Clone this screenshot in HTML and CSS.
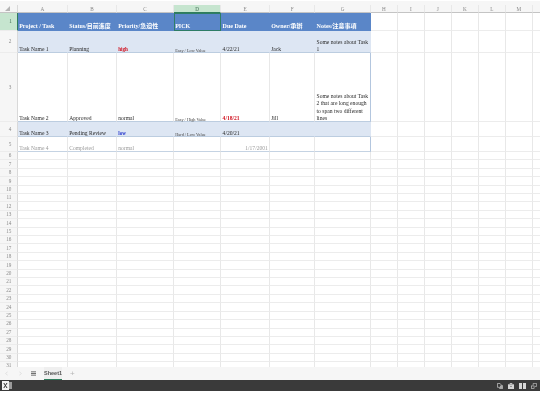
FILE: index.html
```html
<!DOCTYPE html>
<html lang="en">
<head>
<meta charset="utf-8">
<title>Sheet1</title>
<link rel="stylesheet" href="styles.css">
</head>
<body>
<div class="app">
  <div class="sheet">
    <div class="topstrip"></div>
    <div class="row colhead">
      <b class="corner"><svg viewBox="0 0 6 6" width="5" height="5"><path d="M6 0V6H0Z" fill="#b5b5b5"/></svg></b>
      <span>A</span><span>B</span><span>C</span><span class="sel">D</span><span>E</span><span>F</span><span>G</span><span>H</span><span>I</span><span>J</span><span>K</span><span>L</span><span>M</span><span></span>
    </div>
    <div class="row r1">
      <b class="sel">1</b>
      <span class="h">Project / Task</span><span class="h">Status/目前進度</span><span class="h">Priority/急迫性</span><span class="h active">PICK</span><span class="h">Due Date</span><span class="h">Owner/承辦</span><span class="h end">Notes/注意事項</span>
      <span></span><span></span><span></span><span></span><span></span><span></span><span></span>
    </div>
    <div class="row r2 band">
      <b>2</b>
      <span>Task Name 1</span><span>Planning</span><span class="red small">high</span><span class="tiny">Easy / Low Value</span><span>4/22/21</span><span>Jack</span><span class="note end"><i>Some notes about Task 1</i></span>
      <span class="off"></span><span class="off"></span><span class="off"></span><span class="off"></span><span class="off"></span><span class="off"></span><span class="off"></span>
    </div>
    <div class="row r3">
      <b>3</b>
      <span>Task Name 2</span><span>Approved</span><span>normal</span><span class="tiny">Easy / High Value</span><span class="red">4/18/21</span><span>Jill</span><span class="note end"><i>Some notes about Task 2 that are long enough to span two different lines</i></span>
      <span></span><span></span><span></span><span></span><span></span><span></span><span></span>
    </div>
    <div class="row r4 band">
      <b>4</b>
      <span>Task Name 3</span><span>Pending Review</span><span class="blue small">low</span><span class="tiny">Hard / Low Value</span><span>4/20/21</span><span></span><span class="end"></span>
      <span class="off"></span><span class="off"></span><span class="off"></span><span class="off"></span><span class="off"></span><span class="off"></span><span class="off"></span>
    </div>
    <div class="row r5 done">
      <b>5</b>
      <span>Task Name 4</span><span>Completed</span><span>normal</span><span></span><span class="right">1/17/2001</span><span></span><span class="end"></span>
      <span></span><span></span><span></span><span></span><span></span><span></span><span></span>
    </div>
    <div class="row"><b>6</b><span></span><span></span><span></span><span></span><span></span><span></span><span></span><span></span><span></span><span></span><span></span><span></span><span></span><span></span></div>
    <div class="row"><b>7</b><span></span><span></span><span></span><span></span><span></span><span></span><span></span><span></span><span></span><span></span><span></span><span></span><span></span><span></span></div>
    <div class="row"><b>8</b><span></span><span></span><span></span><span></span><span></span><span></span><span></span><span></span><span></span><span></span><span></span><span></span><span></span><span></span></div>
    <div class="row"><b>9</b><span></span><span></span><span></span><span></span><span></span><span></span><span></span><span></span><span></span><span></span><span></span><span></span><span></span><span></span></div>
    <div class="row"><b>10</b><span></span><span></span><span></span><span></span><span></span><span></span><span></span><span></span><span></span><span></span><span></span><span></span><span></span><span></span></div>
    <div class="row"><b>11</b><span></span><span></span><span></span><span></span><span></span><span></span><span></span><span></span><span></span><span></span><span></span><span></span><span></span><span></span></div>
    <div class="row"><b>12</b><span></span><span></span><span></span><span></span><span></span><span></span><span></span><span></span><span></span><span></span><span></span><span></span><span></span><span></span></div>
    <div class="row"><b>13</b><span></span><span></span><span></span><span></span><span></span><span></span><span></span><span></span><span></span><span></span><span></span><span></span><span></span><span></span></div>
    <div class="row"><b>14</b><span></span><span></span><span></span><span></span><span></span><span></span><span></span><span></span><span></span><span></span><span></span><span></span><span></span><span></span></div>
    <div class="row"><b>15</b><span></span><span></span><span></span><span></span><span></span><span></span><span></span><span></span><span></span><span></span><span></span><span></span><span></span><span></span></div>
    <div class="row"><b>16</b><span></span><span></span><span></span><span></span><span></span><span></span><span></span><span></span><span></span><span></span><span></span><span></span><span></span><span></span></div>
    <div class="row"><b>17</b><span></span><span></span><span></span><span></span><span></span><span></span><span></span><span></span><span></span><span></span><span></span><span></span><span></span><span></span></div>
    <div class="row"><b>18</b><span></span><span></span><span></span><span></span><span></span><span></span><span></span><span></span><span></span><span></span><span></span><span></span><span></span><span></span></div>
    <div class="row"><b>19</b><span></span><span></span><span></span><span></span><span></span><span></span><span></span><span></span><span></span><span></span><span></span><span></span><span></span><span></span></div>
    <div class="row"><b>20</b><span></span><span></span><span></span><span></span><span></span><span></span><span></span><span></span><span></span><span></span><span></span><span></span><span></span><span></span></div>
    <div class="row"><b>21</b><span></span><span></span><span></span><span></span><span></span><span></span><span></span><span></span><span></span><span></span><span></span><span></span><span></span><span></span></div>
    <div class="row"><b>22</b><span></span><span></span><span></span><span></span><span></span><span></span><span></span><span></span><span></span><span></span><span></span><span></span><span></span><span></span></div>
    <div class="row"><b>23</b><span></span><span></span><span></span><span></span><span></span><span></span><span></span><span></span><span></span><span></span><span></span><span></span><span></span><span></span></div>
    <div class="row"><b>24</b><span></span><span></span><span></span><span></span><span></span><span></span><span></span><span></span><span></span><span></span><span></span><span></span><span></span><span></span></div>
    <div class="row"><b>25</b><span></span><span></span><span></span><span></span><span></span><span></span><span></span><span></span><span></span><span></span><span></span><span></span><span></span><span></span></div>
    <div class="row"><b>26</b><span></span><span></span><span></span><span></span><span></span><span></span><span></span><span></span><span></span><span></span><span></span><span></span><span></span><span></span></div>
    <div class="row"><b>27</b><span></span><span></span><span></span><span></span><span></span><span></span><span></span><span></span><span></span><span></span><span></span><span></span><span></span><span></span></div>
    <div class="row"><b>28</b><span></span><span></span><span></span><span></span><span></span><span></span><span></span><span></span><span></span><span></span><span></span><span></span><span></span><span></span></div>
    <div class="row"><b>29</b><span></span><span></span><span></span><span></span><span></span><span></span><span></span><span></span><span></span><span></span><span></span><span></span><span></span><span></span></div>
    <div class="row"><b>30</b><span></span><span></span><span></span><span></span><span></span><span></span><span></span><span></span><span></span><span></span><span></span><span></span><span></span><span></span></div>
    <div class="row"><b>31</b><span></span><span></span><span></span><span></span><span></span><span></span><span></span><span></span><span></span><span></span><span></span><span></span><span></span><span></span></div>
  </div>
  <div class="tabs">
    <svg class="prev" viewBox="0 0 4 6" width="3" height="5"><path d="M3.500 .5 1 3l2.500 2.500" fill="none" stroke="#d0d0d0" stroke-width=".8"/></svg>
    <svg class="next" viewBox="0 0 4 6" width="3" height="5"><path d="M.5 .5 3 3 .5 5.500" fill="none" stroke="#d0d0d0" stroke-width=".8"/></svg>
    <svg class="menu" viewBox="0 0 6 5" width="5" height="5"><path d="M0 .5H6M0 2.500H6M0 4.500H6" stroke="#555" stroke-width="1"/></svg>
    <span class="tab">Sheet1</span>
    <span class="plus">+</span>
  </div>
  <div class="status">
    <svg class="xl" viewBox="0 0 10 9" width="10" height="9"><rect x="5" y="1" width="5" height="7" fill="#9a9a9a"/><rect x="0" y="0" width="7" height="9" fill="#f2f2f2"/><path d="M1.800 2 5 7M5 2 1.800 7" stroke="#333" stroke-width="1"/></svg>
    <div class="status-icons">
      <svg viewBox="0 0 7 7" width="6" height="6"><path d="M.5 .5h3l1 1v1.500h2v3.500h-3.500V5H.5Z" fill="none" stroke="#d6d6d6" stroke-width=".8"/><rect x="3.500" y="3.500" width="3" height="3" fill="#aaa"/></svg>
      <svg viewBox="0 0 7 7" width="6" height="6"><path d="M0 1.500h7V7H0Z" fill="#d6d6d6"/><path d="M2.500 4h2" fill="none" stroke="#444" stroke-width=".7"/><path d="M2 0h3v1H2Z" fill="#d6d6d6"/></svg>
      <svg viewBox="0 0 7 6" width="7" height="6"><path d="M0 0h3v6H0ZM4 0h3v6H4Z" fill="#d6d6d6"/></svg>
      <svg viewBox="0 0 7 7" width="6" height="6"><path d="M2.500 2.500V.5h4v3.500h-2" fill="none" stroke="#d6d6d6" stroke-width=".7"/><rect x=".4" y="3.400" width="3.200" height="3.200" fill="none" stroke="#d6d6d6" stroke-width=".7"/></svg>
    </div>
  </div>
</div>
</body>
</html>
```
FILE: styles.css
```css
* { box-sizing: border-box; }
html, body { margin: 0; padding: 0; background: #fff; }
body { width: 540px; height: 405px; overflow: hidden; font-family: "Liberation Serif", "Noto Sans CJK SC", serif; }
.app { display: flex; flex-direction: column; height: 391px; filter: blur(.3px); }

.sheet { height: 367px; flex: none; overflow: hidden; display: flex; flex-direction: column; }
.topstrip { height: 5px; flex: none; background: linear-gradient(#fff 1.500px, #f6f6f6 1.500px); }

.row {
  flex: none;
  height: 8.420px;
  display: grid;
  grid-template-columns: 17.900px 50px 49px 57px 47.400px 48.600px 45.400px 55.600px 27px 27px 27px 27px 27px 27px 8px;
}
.row > b {
  background: #f6f6f6;
  color: #8a8a8a;
  font-weight: normal;
  font-size: 5.200px;
  line-height: 1;
  display: flex;
  align-items: center;
  justify-content: flex-end;
  padding: .5px 5.500px 0 0;
  border-right: 1px solid #d9d9d9;
  border-bottom: 1px solid #ececec;
}
.row > span {
  display: flex;
  align-items: flex-end;
  min-width: 0;
  padding: 0 1px 0 1.300px;
  font-size: 5.600px;
  line-height: 5px;
  color: #2a2a2a;
  border-right: 1px solid #e8e8e8;
  border-bottom: 1px solid #ececec;
  white-space: nowrap;
}

.colhead { height: 8.300px; }
.colhead > span {
  background: #f6f6f6;
  color: #8a8a8a;
  font-size: 5.200px;
  line-height: 1;
  align-items: center;
  justify-content: center;
  padding: 1px 0 0;
  border-bottom: 1px solid #c4c4c4;
}
.colhead > .corner { justify-content: center; padding: 0 1px 0 0; border-bottom: 1px solid #c4c4c4; }
.colhead > .sel { background: #c6e5cf; color: #3d6b50; border-bottom-color: #2f7d5c; }
.row > b.sel { background: #c6e5cf; color: #3d6b50; padding-right: 5px; border-right-color: #2f7d5c; }

.r1 { height: 17.600px; }
.r1 > .h {
  background: #5a86c8;
  color: #fff;
  font-weight: bold;
  font-size: 6px;
  border-right: 0;
  border-bottom: 0;
  padding-bottom: 2.300px;
}
.r1 > .active { border: 1px solid #2e7d66; padding-left: .300px; padding-bottom: 1.300px; }

.r2 { height: 22.100px; }
.r3 { height: 69px; }
.r4 { height: 15px; }
.r5 { height: 15px; }

.band > span:not(.off) { background: #dde6f3; border-color: #dde6f3; border-bottom-color: #bccde0; }
.r3 > span { border-bottom-color: #bccde0; }
.r3 > span:nth-child(n+9) { border-bottom-color: #ececec; }
.r5 > span { border-bottom-color: #c5d3e3; }
.r5 > span:nth-child(n+9) { border-bottom-color: #ececec; }

.row > .end { border-right-color: #b3c6de; }
.note { white-space: normal; }
.note > i { font-style: normal; line-height: 7.300px; margin-bottom: -1.300px; white-space: normal; }

.row > .tiny { font-size: 4.300px; line-height: 3.200px; color: #444; }
.row > .red { color: #d0111f; font-weight: bold; }
.row > .blue { color: #2233cc; font-weight: bold; }
.row > .small { font-size: 5.200px; }
.row.done > span { color: #9b9b9b; }
.row > .right { justify-content: flex-end; }

.tabs {
  height: 13px;
  flex: none;
  background: #f6f6f6;
  display: flex;
  align-items: center;
  padding-left: 5px;
}
.next { margin-left: 10.500px; }
.menu { margin-left: 9.500px; }
.tab {
  margin-left: 8px;
  height: 13px;
  width: 18px;
  display: flex;
  align-items: center;
  justify-content: center;
  font-family: "Liberation Sans", sans-serif;
  font-size: 5.500px;
  font-weight: bold;
  color: #555;
  background: #efefef;
  border-bottom: 1px solid #2f7d5c;
}
.plus { font-family: "Liberation Sans", sans-serif; font-size: 8px; color: #b5b5b5; margin-left: 8px; }

.status {
  height: 11px;
  flex: none;
  background: #3a3a3a;
  display: flex;
  align-items: center;
  justify-content: space-between;
  padding: 0 2px;
}
.status-icons { display: flex; align-items: center; gap: 5px; padding-right: 1px; }
```
